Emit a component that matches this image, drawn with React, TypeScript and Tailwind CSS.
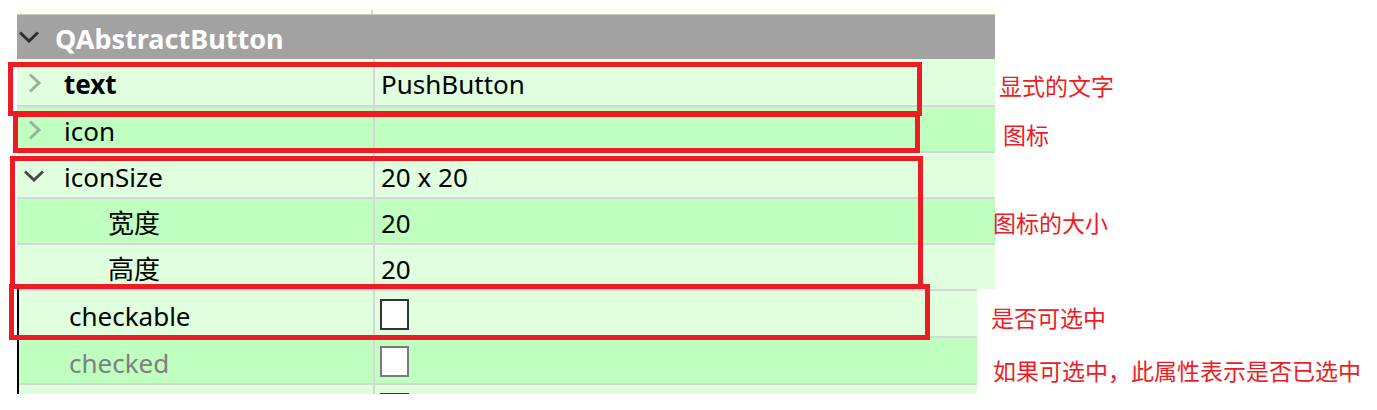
import React from "react";

type Row = {
  label: string;
  value?: string;
  dark?: boolean;
  bold?: boolean;
  chevron?: "right" | "down";
  indent?: boolean;
};

const font = { fontFamily: '"Noto Sans", "Noto Sans CJK SC", sans-serif' };

const upperRows: Row[] = [
  { label: "text", value: "PushButton", bold: true, chevron: "right" },
  { label: "icon", value: "", dark: true, chevron: "right" },
  { label: "iconSize", value: "20 x 20", chevron: "down" },
  { label: "宽度", value: "20", dark: true, indent: true },
  { label: "高度", value: "20", indent: true },
];

const notes = [
  { text: "显式的文字", className: "left-[999px] top-[74px]" },
  { text: "图标", className: "left-[1003px] top-[123px]" },
  { text: "图标的大小", className: "left-[993px] top-[211px]" },
  { text: "是否可选中", className: "left-[991px] top-[306px]" },
  { text: "如果可选中，此属性表示是否已选中", className: "left-[993px] top-[359px]" },
];

const Chevron = ({ dir, color }: { dir: "right" | "down"; color: string }) =>
  dir === "right" ? (
    <svg width="14" height="20" viewBox="0 0 14 20" fill="none">
      <path d="M2 1.5 L11 10 L2 18.5" stroke={color} strokeWidth="3" />
    </svg>
  ) : (
    <svg width="20" height="12" viewBox="0 0 20 12" fill="none">
      <path d="M1 1.5 L10 10 L19 1.5" stroke={color} strokeWidth="3" />
    </svg>
  );

const Checkbox = ({ muted }: { muted?: boolean }) => (
  <div
    className={`w-[29px] h-[31px] bg-white border-2 ${
      muted ? "border-[#7a7a7a]" : "border-[#333333]"
    }`}
  />
);

export default function App() {
  return (
    <div
      className="relative w-[1377px] h-[410px] bg-white overflow-hidden text-[26px] text-black"
      style={font}
    >
      <div className="pl-[17px] pt-[10px]">
        {/* property editor, upper part */}
        <div className="w-[978px]">
          <div className="flex h-[4px] bg-[#ffffe1] border-b border-[#c8c8c8] box-content">
            <div className="w-[356px] border-r-2 border-[#d6d6d6]" />
          </div>
          <div className="flex items-center h-[44px] bg-[#a2a2a2]">
            <div className="pl-[2px] w-[38px] flex items-center">
              <Chevron dir="down" color="#2e2e2e" />
            </div>
            <span className="font-bold text-white text-[27px] leading-none pt-[3px]">
              QAbstractButton
            </span>
          </div>
          {upperRows.map((r, i) => (
            <div
              key={r.label}
              className={`flex h-[46px] ${i > 0 ? "border-t-2 border-[#d6d6d6]" : ""} ${
                r.dark ? "bg-[#bfffbf]" : "bg-[#dfffdf]"
              }`}
            >
              <div
                className={`flex items-center w-[358px] border-r-2 border-[#d6d6d6] ${
                  r.indent ? "pl-[91px]" : ""
                }`}
              >
                {!r.indent && (
                  <div
                    className={`flex items-center ${
                      r.chevron === "down" ? "w-[47px] pl-[7px] pt-[2px]" : "w-[47px] pl-[11px] pt-[2px]"
                    }`}
                  >
                    {r.chevron === "right" ? (
                      <Chevron dir="right" color="#9db29d" />
                    ) : (
                      <Chevron dir="down" color="#4a4a4a" />
                    )}
                  </div>
                )}
                <span className={`leading-none pt-[4px] ${r.bold ? "font-bold" : ""}`}>{r.label}</span>
              </div>
              <div className="flex items-center pl-[6px]">
                <span className="leading-none pt-[4px]">{r.value}</span>
              </div>
            </div>
          ))}
        </div>

        {/* property editor, lower part */}
        <div className="w-[960px] border-l-2 border-black">
          {[
            { label: "checkable", dark: false, muted: false, h: "h-[47px]" },
            { label: "checked", dark: true, muted: true, h: "h-[47px]" },
            { label: "", dark: false, muted: false, h: "h-[11px]" },
          ].map((r, i) => (
            <div
              key={i}
              className={`flex overflow-hidden border-t-2 border-[#d6d6d6] ${r.h} ${
                r.dark ? "bg-[#bfffbf]" : "bg-[#dfffdf]"
              }`}
            >
              <div className="flex items-center w-[356px] h-[45px] shrink-0 border-r-2 border-[#d6d6d6] pl-[50px]">
                <span className={`leading-none pt-[4px] ${r.muted ? "text-[#808080]" : ""}`}>
                  {r.label}
                </span>
              </div>
              <div className="pl-[5px] pt-[8px]">
                <Checkbox muted={r.muted} />
              </div>
            </div>
          ))}
        </div>
      </div>

      {/* red annotation boxes */}
      <div className="absolute left-[8px] top-[62px] w-[914px] h-[54px] border-[5px] border-[#ed1c24]" />
      <div className="absolute left-[13px] top-[112px] w-[907px] h-[41px] border-[5px] border-[#ed1c24]" />
      <div className="absolute left-[10px] top-[156px] w-[913px] h-[133px] border-[5px] border-[#ed1c24]" />
      <div className="absolute left-[9px] top-[284px] w-[921px] h-[56px] border-[5px] border-[#ed1c24]" />

      {notes.map((n) => (
        <span
          key={n.text}
          className={`absolute ${n.className} text-[23px] leading-none text-[#ed1c24] whitespace-nowrap`}
          style={{ fontFamily: '"Noto Sans CJK SC", sans-serif' }}
        >
          {n.text}
        </span>
      ))}
    </div>
  );
}
